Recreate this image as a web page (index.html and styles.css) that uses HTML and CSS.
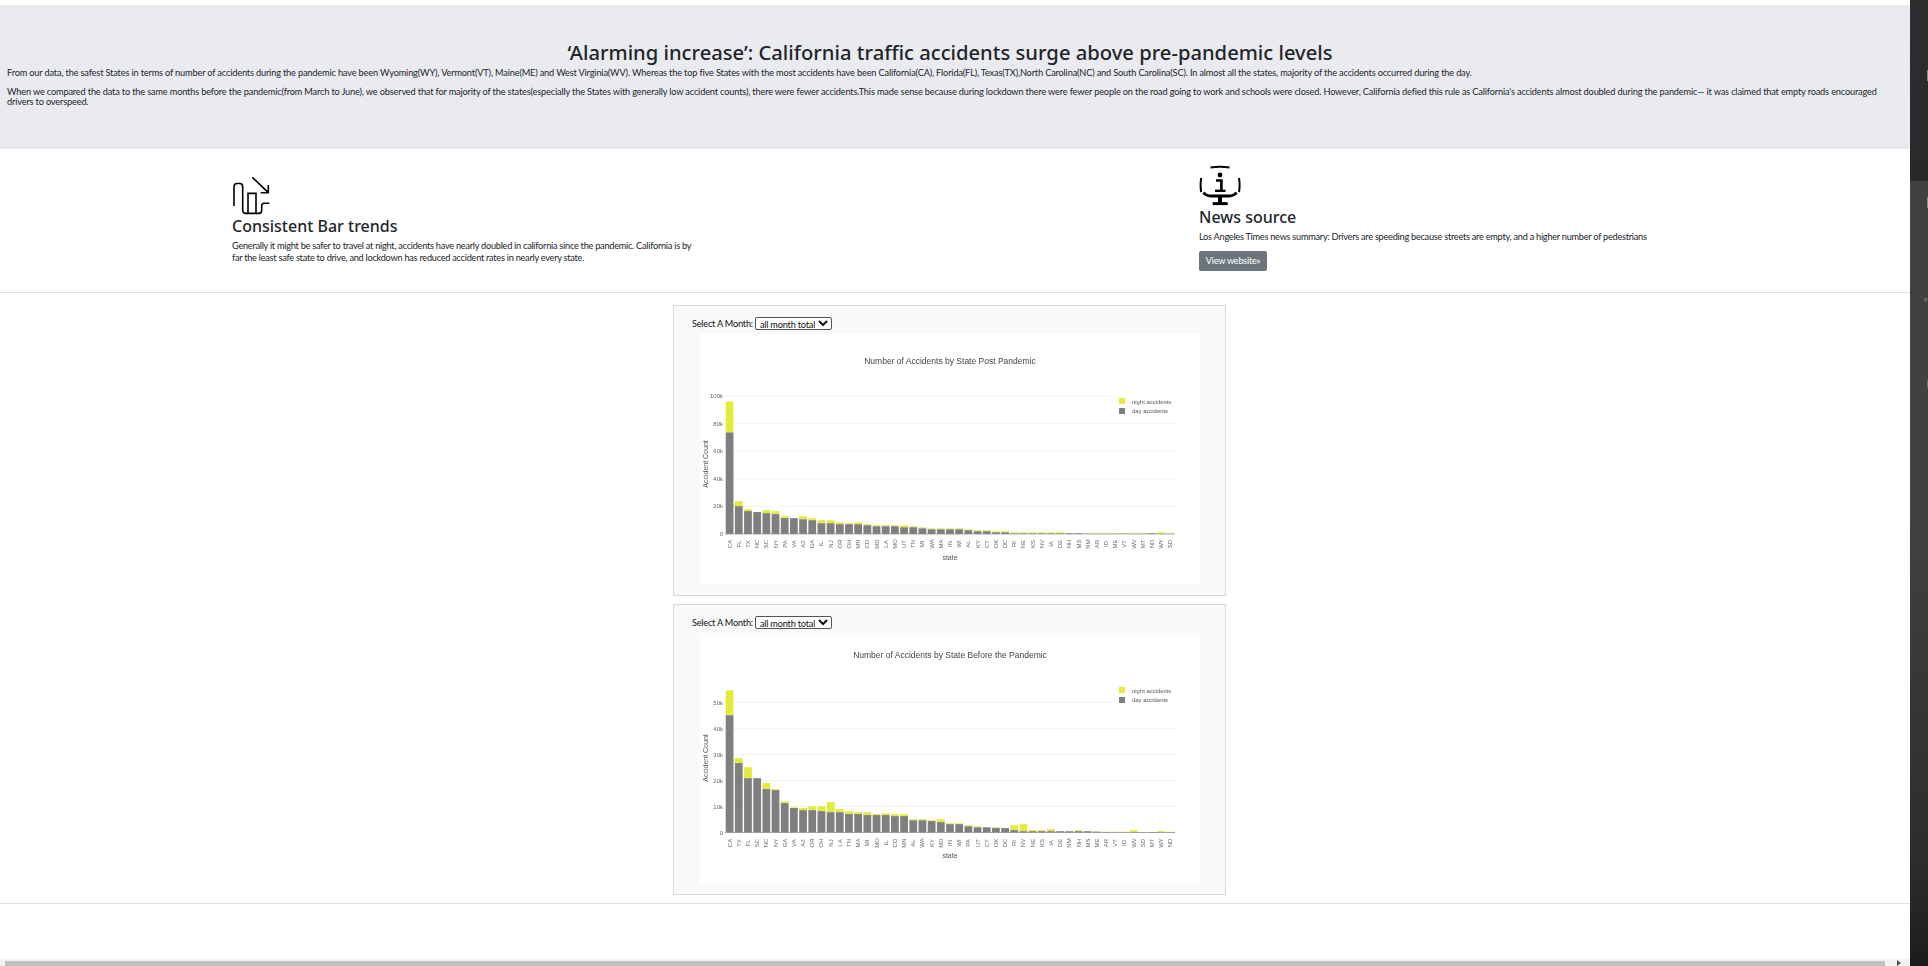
FILE: index.html
```html
<!DOCTYPE html>
<html lang="en">
<head>
<meta charset="utf-8">
<title>California traffic accidents</title>
<link rel="stylesheet" href="styles.css">
</head>
<body>
<main class="page">
  <section class="jumbotron">
    <h3 class="headline">‘Alarming increase’: California traffic accidents surge above pre-pandemic levels</h3>
    <p class="intro">From our data, the safest States in terms of number of accidents during the pandemic have been Wyoming(WY), Vermont(VT), Maine(ME) and West Virginia(WV). Whereas the top five States with the most accidents have been California(CA), Florida(FL), Texas(TX),North Carolina(NC) and South Carolina(SC). In almost all the states, majority of the accidents occurred during the day.</p>
    <p class="intro">When we compared the data to the same months before the pandemic(from March to June), we observed that for majority of the states(especially the States with generally low accident counts), there were fewer accidents.This made sense because during lockdown there were fewer people on the road going to work and schools were closed. However, California defied this rule as California's accidents almost doubled during the pandemic— it was claimed that empty roads encouraged drivers to overspeed.</p>
  </section>

  <section class="features">
    <article class="feature feature-left">
      <svg class="icon-trend" width="40" height="40" viewBox="0 0 40 40" fill="none" stroke="#000" stroke-width="1.6">
        <path d="M2 31V12Q2 8.5 5 8.5H8Q10.7 8.5 10.7 12V35Q10.7 38.4 14 38.4H24V18.4H16V38.4"/>
        <path d="M24 38.4H27Q29.7 38.4 29.7 35V31Q29.7 28.3 32 28.3H37.3"/>
        <path d="M20.3 2.3L36.3 17.7M36.3 10V17.7H28.7"/>
      </svg>
      <h4 class="feature-title">Consistent Bar trends</h4>
      <p class="feature-text">Generally it might be safer to travel at night, accidents have nearly doubled in california since the pandemic. California is by far the least safe state to drive, and lockdown has reduced accident rates in nearly every state.</p>
    </article>
    <article class="feature feature-right">
      <svg class="icon-info" width="42" height="41" viewBox="0 0 42 41" fill="none" stroke="#000">
        <path stroke-width="2" d="M11.5 2.6Q21 1 30.5 2.6M2.2 13Q1 20 2.2 27M40 13Q41.2 20 40 27"/>
        <path stroke-width="3" d="M4.5 27.5Q7 31 12 31H30Q35 31 37.5 27.5"/>
        <path stroke-width="4" d="M21 30V38"/>
        <path stroke-width="3" d="M13.7 38.6H28.7"/>
        <circle cx="21" cy="10" r="2.4" fill="#000" stroke="none"/>
        <path stroke-width="2.6" d="M17 15.5H22.4V25"/>
        <path stroke-width="2.4" d="M16 25.8H26.5"/>
      </svg>
      <h4 class="feature-title feature-title-lg">News source</h4>
      <p class="feature-text">Los Angeles Times news summary: Drivers are speeding because streets are empty, and a higher number of pedestrians</p>
      <a class="btn" href="#">View website»</a>
    </article>
  </section>

  <hr class="rule">

  <section class="panels">
    <div class="panel">
      <div class="control">
        <label class="control-label">Select A Month:</label>
        <select class="month"><option>all month total</option></select>
      </div>
      <div class="chart" data-chart="post"></div>
    </div>
    <div class="panel">
      <div class="control">
        <label class="control-label">Select A Month:</label>
        <select class="month"><option>all month total</option></select>
      </div>
      <div class="chart" data-chart="pre"></div>
    </div>
  </section>

  <hr class="rule rule-bottom">

  <div class="hscroll">
    <div class="hscroll-thumb"></div>
    <div class="hscroll-arrow"></div>
  </div>
</main>
<aside class="dock">
  <span class="dock-mark dock-mark-a"></span>
  <span class="dock-mark dock-mark-b"></span>
  <span class="dock-tri"></span>
  <span class="dock-mark dock-mark-c"></span>
</aside>
<script src="chart.js"></script>
</body>
</html>
```
FILE: styles.css
```css
* { box-sizing: border-box; }
html, body { margin: 0; height: 100%; overflow: hidden; }
body {
  display: flex;
  width: 1928px;
  height: 966px;
  background: #fff;
  color: #212529;
  font-family: Lato, "Liberation Sans", sans-serif;
  font-size: 9.2px;
}
.page {
  width: 1910px;
  height: 966px;
  display: flex;
  flex-direction: column;
  padding-top: 5px;
}
.jumbotron {
  height: 144px;
  background: #eaebef;
  border-radius: 0 0 3px 0;
  padding: 36px 7px 0;
}
.headline {
  margin: 0 0 4px;
  font-family: "Noto Sans", sans-serif;
  font-size: 20.2px;
  font-weight: 500;
  line-height: 23px;
  text-align: center;
  padding-right: 10px;
}
.intro {
  max-width: 1880px;
  margin: 0 0 9px;
  font-size: 9.2px;
  letter-spacing: -0.155px;
  line-height: 10px;
}
.features {
  height: 143px;
  display: grid;
  grid-template-columns: 967px 1fr;
  padding-left: 232px;
}
.feature-left { padding-top: 26px; width: 465px; }
.feature-right { padding-top: 16px; width: 500px; }
.icon-trend, .icon-info { display: block; }
.feature-title {
  margin: 1px 0 4px;
  font-family: "Noto Sans", sans-serif;
  font-size: 16px;
  font-weight: 500;
  line-height: 20px;
}
.feature-text {
  margin: 0;
  font-size: 9.2px;
  letter-spacing: -0.26px;
  line-height: 12px;
}
.btn {
  display: inline-block;
  margin-top: 8px;
  height: 20px;
  width: 68px;
  background: #6c757d;
  border-radius: 2px;
  color: #fff;
  font-size: 9.2px;
  letter-spacing: -0.27px;
  line-height: 20px;
  text-align: center;
  text-decoration: none;
}
.rule {
  margin: 0;
  border: 0;
  height: 1px;
  background: #e0e0e0;
  flex: none;
}
.panels {
  padding: 12px 0 0 673px;
  display: flex;
  flex-direction: column;
  gap: 8px;
}
.panel {
  width: 553px;
  height: 291px;
  background: #f8f9fa;
  border: 1px solid #d8d8d8;
  padding: 11px 25px 0 18px;
}
.control {
  display: flex;
  align-items: center;
  height: 13px;
  gap: 2px;
  font-size: 9.2px;
  letter-spacing: -0.22px;
  color: #111;
}
.month {
  width: 77px;
  height: 13px;
  padding: 0 0 1px;
  border: 1px solid #555;
  border-radius: 2px;
  background: #fff;
  color: #111;
  font-family: inherit;
  font-size: 9.2px;
  letter-spacing: -0.2px;
  line-height: 10px;
}
.chart { width: 500px; height: 250px; margin: 4px 0 0 8px; background: #fff; }
.chart svg { display: block; filter: blur(0.3px); }
.rule-bottom { margin-top: 8px; }
.hscroll {
  margin-top: auto;
  height: 7px;
  background: #f1f1f1;
  display: flex;
  align-items: stretch;
  padding: 2px 0 0 5px;
  position: relative;
}
.hscroll-thumb { width: 1880px; background: #c1c1c1; }
.hscroll-arrow {
  position: absolute;
  right: 9px;
  bottom: 0;
  width: 0;
  height: 0;
  border-left: 4px solid #505050;
  border-top: 3px solid transparent;
  border-bottom: 3px solid transparent;
}
.dock {
  position: relative;
  width: 18px;
  height: 966px;
  background: linear-gradient(#2e2e30 0, #29292b 181px, #404143 181px, #404143 520px, #2c2c2e 866px, #1c1c1e 966px);
}
.dock-mark { position: absolute; right: 0; width: 1.5px; background: #8a8a8a; }
.dock-mark-a { top: 70px; height: 11px; }
.dock-mark-b { top: 197px; height: 11px; }
.dock-mark-c { top: 380px; height: 8px; background: #6a6a6a; }
.dock-tri {
  position: absolute;
  right: 0;
  top: 298px;
  border-top: 5px solid #666;
  border-left: 3px solid transparent;
  border-right: 2px solid transparent;
}

/* chart parts */
.c-grid { stroke: #f1f1f1; stroke-width: 1; }
.c-zero { stroke: #888; stroke-width: 0.7; }
.c-day { fill: #7f7f7f; }
.c-night { fill: #e3ec3c; }
.c-title { font: 8.5px "Liberation Sans", sans-serif; fill: #444; text-anchor: middle; dominant-baseline: central; }
.c-tick { font: 6px "Liberation Sans", sans-serif; fill: #666; dominant-baseline: central; }
.c-ytick { text-anchor: end; }
.c-xtick { text-anchor: middle; }
.c-axis { font: 7px "Liberation Sans", sans-serif; fill: #555; text-anchor: middle; dominant-baseline: central; }
.c-legend { font: 5.9px "Liberation Sans", sans-serif; fill: #555; dominant-baseline: central; }
```
FILE: chart.js
```js
var CHARTS = {
  post: {
    title: 'Number of Accidents by State Post Pandemic',
    base: 200, scale: 1.38, step: 20, ticks: 5, titleY: 27, legendY: 64, axisY: 223, yTitle: 130,
    states: 'CA FL TX NC SC NY PA VA AZ GA IL NJ OR OH MN CO MD LA MO UT TN MI WA MA IN WI AL KY CT OK DC RI NE KS NV IA DE NH MS NM AR ID ME VT WV MT ND WY SD',
    day: [73.6,20.2,16.6,15.9,15.1,14.4,11.5,11.5,10.7,10,7.8,7.8,7.1,7.1,7.1,6.3,5.6,5.6,5.6,4.9,4.9,4.1,3.4,3.4,3.4,3.4,2.7,2,2,1.2,1.2,.3,.3,.3,.3,.3,.3,.5,.5,.1,.1,.1,.1,.1,.1,.1,.5,.1,.1],
    all: [96,23.9,18,15.9,17.3,16.6,12.9,11.5,12.9,11.5,10,10,8.5,7.8,8.5,7.1,6.3,6.3,6.3,6.3,5.6,4.8,4.1,4.1,4.1,4.1,3.4,2.7,2.7,2,2,1.2,1.2,1.2,1.2,1.2,1.2,.6,.6,.5,.5,.5,.5,.5,.5,.5,.6,1.2,.5]
  },
  pre: {
    title: 'Number of Accidents by State Before the Pandemic',
    base: 199.5, scale: 2.6, step: 10, ticks: 5, titleY: 22, legendY: 54, axisY: 222, yTitle: 125,
    states: 'CA TX FL SC NC NY GA VA AZ OR OH NJ LA TN MA MI MO IL CO MN AL WA KY MD IN WI PA UT CT OK DC RI NV NE KS IA DE NM NH MS ME AR VT ID WV SD MT WY ND',
    day: [45.1,26.7,20.9,20.9,16.7,16.3,11.3,9.4,8.6,8.6,8.2,7.8,7.8,7.1,7.1,6.7,6.7,6.7,6.3,6.3,4.7,4.7,4.4,4,3.2,3.2,2.4,2,2,1.7,1.7,.9,.5,.5,.5,.5,.5,.5,.5,.5,.3,.15,.05,.05,.1,.1,.2,.1,.1],
    all: [54.7,28.6,25.1,20.9,19,16.7,12,9.7,9.4,10.1,10.1,11.7,9,8.2,7.8,7.8,7.1,7.4,7.1,7.1,5.1,5.1,4.7,5.1,3.6,3.6,2.8,2.4,2,2,1.7,2.8,3.2,.9,.9,1.3,.5,.5,.9,.5,.5,.3,.3,.3,.9,.2,.2,.6,.3]
  }
};
var NS = 'http://www.w3.org/2000/svg';
var LEFT = 25, RIGHT = 475, LEGEND_LEFT = 412;

function el(parent, name, attrs, text) {
  var node = document.createElementNS(NS, name);
  for (var key in attrs) node.setAttribute(key, attrs[key]);
  if (text !== undefined) node.textContent = text;
  parent.appendChild(node);
  return node;
}

function draw(host) {
  var c = CHARTS[host.getAttribute('data-chart')];
  var svg = el(host, 'svg', { width: 500, height: 250, viewBox: '0 0 500 250' });
  el(svg, 'text', { 'class': 'c-title', x: 250, y: c.titleY }, c.title);

  for (var t = 0; t <= c.ticks; t++) {
    var y = c.base - t * c.step * c.scale;
    if (t > 0) el(svg, 'line', { 'class': 'c-grid', x1: LEFT, x2: t === c.ticks ? LEGEND_LEFT : RIGHT, y1: y, y2: y });
    el(svg, 'text', { 'class': 'c-tick c-ytick', x: 23, y: y }, t === 0 ? '0' : (t * c.step) + 'k');
  }

  var states = c.states.split(' ');
  var band = (RIGHT - LEFT) / states.length;
  states.forEach(function (state, i) {
    var x = LEFT + band * i + 0.7;
    var w = band - 1.4;
    var dayH = c.day[i] * c.scale;
    var allH = c.all[i] * c.scale;
    el(svg, 'rect', { 'class': 'c-night', x: x, y: c.base - allH, width: w, height: allH - dayH });
    el(svg, 'rect', { 'class': 'c-day', x: x, y: c.base - dayH, width: w, height: dayH });
    var cx = LEFT + band * (i + 0.5);
    el(svg, 'text', { 'class': 'c-tick c-xtick', x: cx, y: 210, transform: 'rotate(-90 ' + cx + ' 210)' }, state);
  });
  el(svg, 'line', { 'class': 'c-zero', x1: LEFT, x2: RIGHT, y1: c.base, y2: c.base });

  el(svg, 'text', { 'class': 'c-axis', x: 250, y: c.axisY }, 'state');
  el(svg, 'text', { 'class': 'c-axis', x: 5, y: c.yTitle, transform: 'rotate(-90 5 ' + c.yTitle + ')' }, 'Accident Count');

  el(svg, 'rect', { 'class': 'c-night', x: 419, y: c.legendY, width: 6, height: 6 });
  el(svg, 'rect', { 'class': 'c-day', x: 419, y: c.legendY + 10, width: 6, height: 6 });
  el(svg, 'text', { 'class': 'c-legend', x: 432, y: c.legendY + 4 }, 'night accidents');
  el(svg, 'text', { 'class': 'c-legend', x: 432, y: c.legendY + 13 }, 'day accidents');
}

Array.prototype.forEach.call(document.querySelectorAll('.chart'), draw);
```
